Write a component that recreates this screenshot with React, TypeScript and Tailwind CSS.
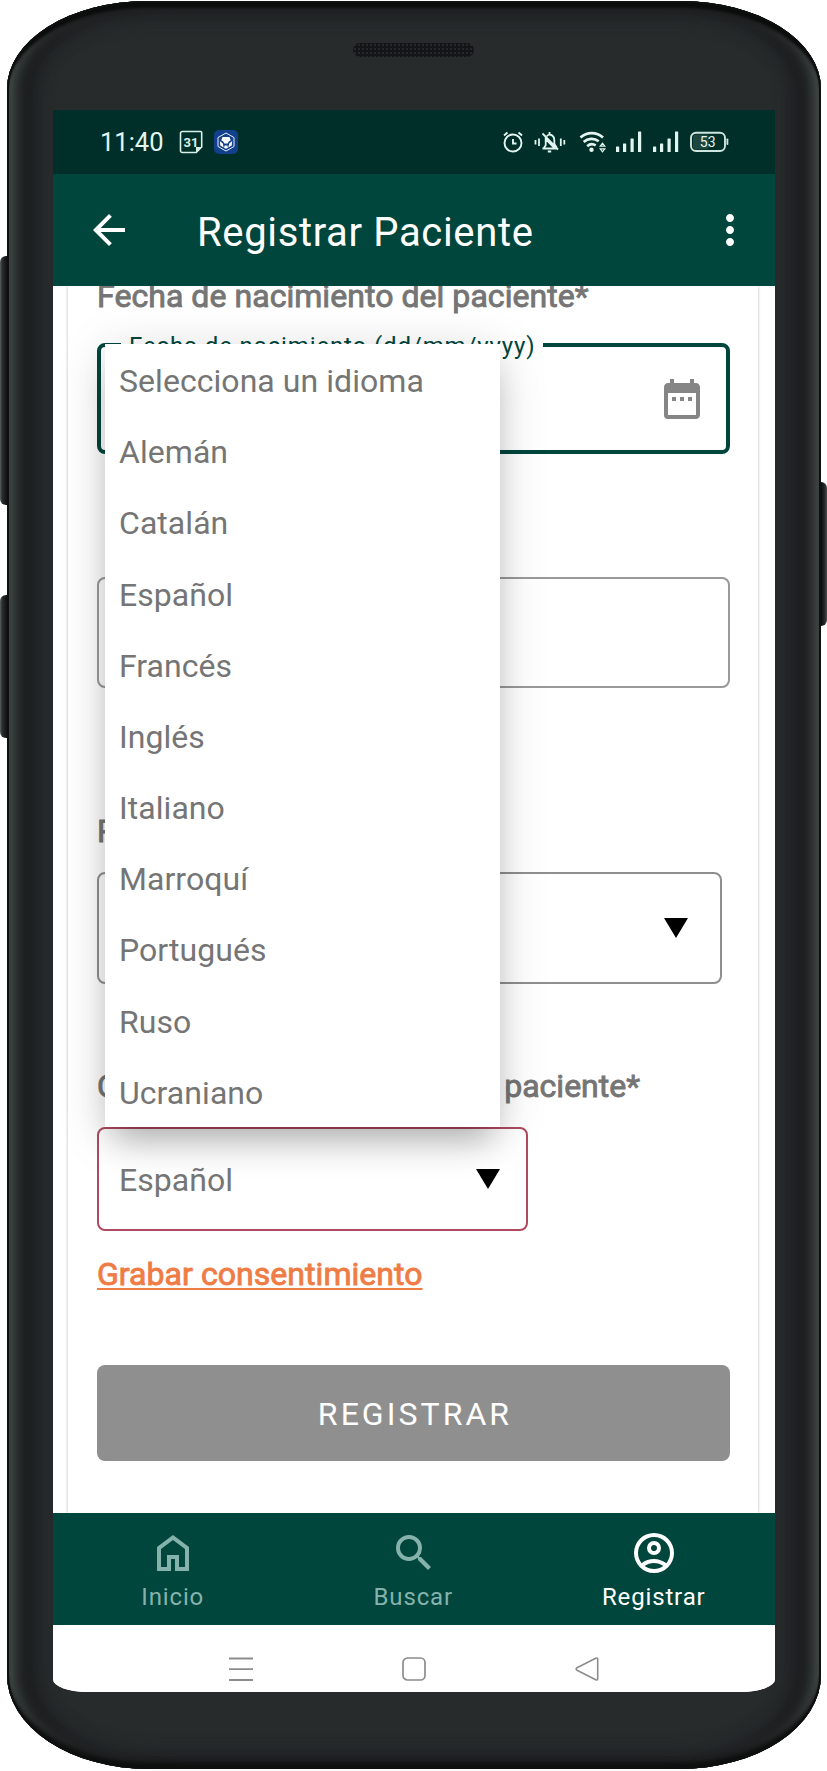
import type { ReactNode } from "react";
import { MdArrowBack, MdDateRange, MdMoreVert, MdSearch } from "react-icons/md";

const languages = [
  "Selecciona un idioma",
  "Alemán",
  "Catalán",
  "Español",
  "Francés",
  "Inglés",
  "Italiano",
  "Marroquí",
  "Portugués",
  "Ruso",
  "Ucraniano",
];

function CalendarDay() {
  return (
    <svg className="h-6 w-6" viewBox="0 0 24 24" fill="none">
      <path d="M3.300 1.500h18.400a1 1 0 0 1 1 1V17l-5.500 5.500H3.300a1.800 1.800 0 0 1-1.800-1.800V3.300a1.800 1.800 0 0 1 1.800-1.800z" stroke="#d9f0e9" strokeWidth="1.600" />
      <path d="M22.500 17l-5.500 5.500v-5.500z" fill="#d9f0e9" />
      <text x="12" y="16.500" textAnchor="middle" fontFamily="Roboto, sans-serif" fontSize="13" fontWeight="700" fill="#d9f0e9">
        31
      </text>
    </svg>
  );
}

function LionBadge() {
  return (
    <svg className="h-6 w-6" viewBox="0 0 24 24">
      <rect width="24" height="24" rx="5" fill="#12408c" />
      <path d="M12 3l8 4.500v9L12 21l-8-4.500v-9z" fill="none" stroke="#e8f0fa" strokeWidth="1" />
      <path d="M8.500 7h7l1.200 3.300-2 1.200-1 2h-3.400l-1-2-2-1.200z" fill="#fff" />
      <path d="M5.800 11l3 2.500.9 4-3.400-1.900zM18.200 11l-3 2.500-.9 4 3.400-1.900zM10.700 15.500h2.600l.7 2.300-2 1-2-1z" fill="#fff" />
    </svg>
  );
}

function Alarm() {
  return (
    <svg className="h-6 w-5" viewBox="0 0 20 24" fill="none" stroke="#e2f5f0" strokeWidth="1.900">
      <circle cx="10" cy="13" r="8.500" />
      <path d="M10 9V13.500h3.500" />
      <path d="M1 5.500L4.500 2.500M19 5.500l-3.500-3" />
    </svg>
  );
}

function BellOff() {
  return (
    <svg className="h-6 w-8" viewBox="0 0 32 24" fill="none" stroke="#e2f5f0" strokeWidth="1.800">
      <path d="M8.500 18.500h14M9.700 18.300l2-3V9l9.300 9.500M12.800 6.300A5 5 0 0 1 15.500 4.500V2M15.500 4.500c3.200.6 4.800 3 4.800 5.700v3.600l2.400 4M8.500 3.500l15.500 16M13.800 21.500h3.400" />
      <path d="M1.500 10v4.500M5 8.500v7.500M26.800 8.500v7.500M30.300 10v4.500" />
    </svg>
  );
}

function Wifi() {
  return (
    <svg className="h-6 w-7" viewBox="0 0 28 24" fill="none">
      <path d="M1.500 7.500a16.500 16.500 0 0 1 22.500 0M4.700 12a11.500 11.500 0 0 1 15-.8M8.200 16.200a7 7 0 0 1 8.500-.8" stroke="#e2f5f0" strokeWidth="2.700" />
      <circle cx="12.500" cy="19.800" r="2.200" fill="#e2f5f0" />
      <path d="M21.200 16.200l2.300-3 2.300 3zM21.200 18.800l2.300 3 2.300-3z" stroke="#e2f5f0" strokeWidth="1.200" />
    </svg>
  );
}

function Signal() {
  return (
    <svg className="h-6 w-[26px]" viewBox="0 0 26 24" fill="#e2f5f0">
      <rect x="0" y="16.500" width="3.200" height="5.500" rx=".5" />
      <rect x="7" y="13.500" width="3.200" height="8.500" rx=".5" />
      <rect x="14.500" y="8.500" width="3.200" height="13.500" rx=".5" />
      <rect x="22" y="1.500" width="3.200" height="20.500" rx=".5" />
    </svg>
  );
}

function Battery() {
  return (
    <svg className="h-6 w-[39px]" viewBox="0 0 39 24">
      <rect x="1" y="2.700" width="34" height="18.300" rx="5" fill="none" stroke="#cfe5df" strokeWidth="1.900" />
      <rect x="3" y="4.500" width="16" height="14.700" rx="3" fill="#1d463f" />
      <rect x="36.500" y="8.500" width="1.800" height="6.500" rx=".8" fill="#cfe5df" />
      <text x="17.700" y="16.600" textAnchor="middle" fontFamily="Roboto, sans-serif" fontSize="14" fill="#e2f5f0">
        53
      </text>
    </svg>
  );
}

function HomeIcon() {
  return (
    <svg className="h-12 w-12" viewBox="0 0 24 24" fill="currentColor">
      <path d="M6 19h3v-6h6v6h3v-9l-6-4.500L6 10v9zM4 21V9l8-6 8 6v12h-7v-6h-2v6z" fillRule="evenodd" />
    </svg>
  );
}

function AccountIcon() {
  return (
    <svg className="h-12 w-12" viewBox="0 0 24 24" fill="currentColor">
      <path d="M5.850 17.100q1.275-.975 2.850-1.538T12 15t3.300.563t2.850 1.537q.875-1.025 1.363-2.325T20 12q0-3.325-2.337-5.663T12 4T6.337 6.338T4 12q0 1.475.488 2.775T5.850 17.100M12 13q-1.475 0-2.488-1.012T8.500 9.500t1.013-2.488T12 6t2.488 1.013T15.500 9.500t-1.012 2.488T12 13m0 9q-2.075 0-3.900-.788t-3.175-2.137T2.788 15.900T2 12t.788-3.900t2.137-3.175T8.100 2.788T12 2t3.900.788t3.175 2.137T21.213 8.100T22 12t-.788 3.900t-2.137 3.175t-3.175 2.138T12 22m0-2q1.325 0 2.500-.387t2.150-1.113q-.975-.725-2.150-1.112T12 17t-2.500.388T7.350 18.500q.975.725 2.150 1.113T12 20m0-9q.650 0 1.075-.425T13.500 9.500t-.425-1.075T12 8t-1.075.425T10.500 9.500t.425 1.075T12 11" />
    </svg>
  );
}

function Caret() {
  return (
    <svg className="h-5 w-6" viewBox="0 0 24 20">
      <path d="M0 0h24L12 20z" fill="#000" />
    </svg>
  );
}

function StatusBar() {
  return (
    <div className="flex h-16 shrink-0 items-center bg-[#002f29] pr-[46px] pl-[47px]">
      <span className="w-[79px] pt-[2px] text-[25.500px] leading-none text-[#e2f5f0]">11:40</span>
      <CalendarDay />
      <span className="ml-[11px] flex">
        <LionBadge />
      </span>
      <span className="ml-auto flex items-center">
        <Alarm />
        <span className="ml-[11px] flex"><BellOff /></span>
        <span className="ml-[13px] flex"><Wifi /></span>
        <span className="ml-[9px] flex"><Signal /></span>
        <span className="ml-[11px] flex"><Signal /></span>
        <span className="ml-[11px] flex"><Battery /></span>
      </span>
    </div>
  );
}

function AppBar() {
  return (
    <div className="flex h-28 shrink-0 items-center bg-[#00463d] pr-[21px] pl-8 text-white">
      <MdArrowBack className="h-12 w-12" />
      <h1 className="ml-[64px] pt-[6px] text-[40px] leading-none tracking-[0.650px]">Registrar Paciente</h1>
      <MdMoreVert className="ml-auto h-12 w-12" />
    </div>
  );
}

function NavItem({ icon, label, active = false }: { icon: ReactNode; label: string; active?: boolean }) {
  return (
    <div className={active ? "flex flex-1 flex-col items-center pt-4 text-white" : "flex flex-1 flex-col items-center pt-4 text-[#85b2ab]"}>
      {icon}
      <span className="mt-[6px] pr-px text-[24px] leading-7 tracking-[0.850px]">{label}</span>
    </div>
  );
}

function LanguageMenu() {
  return (
    <ul className="absolute top-[58px] left-[52px] z-10 w-[395px] bg-white shadow-[0_22px_30px_-10px_rgba(0,0,0,0.22),0_8px_44px_rgba(0,0,0,0.17)]">
      {languages.map((name) => (
        <li key={name} className="flex h-[71.180px] items-center pt-[3px] pl-[14px] text-[32px] leading-none tracking-[0.050px] text-[#757575]">
          {name}
        </li>
      ))}
    </ul>
  );
}

function Form() {
  return (
    <div className="relative h-[1227px] shrink-0 overflow-hidden bg-white pr-[17px] pl-[15px]">
      <div className="h-full bg-white px-[29px] shadow-[0_0_3px_rgba(0,0,0,0.28)]">
        <div className="flex h-[57px] items-start">
          <span className="-mt-[9px] text-[32px] leading-[38px] tracking-[0.050px] whitespace-nowrap text-[#757575] [-webkit-text-stroke:0.900px_#757575]">
            Fecha de nacimiento del paciente*
          </span>
        </div>
        <div className="relative flex h-[111px] w-[633px] items-center justify-end rounded-lg border-4 border-[#00463d] pr-5">
          <span className="absolute -top-[15px] left-5 bg-white pr-[8px] pl-[8px] text-[24px] leading-7 tracking-[0.870px] whitespace-nowrap text-[#00463d]">
            Fecha de nacimiento (dd/mm/yyyy)
          </span>
          <MdDateRange className="h-12 w-12 text-[#858585]" />
        </div>
        <div className="mt-[123px] h-[111px] w-[633px] rounded-lg border-2 border-[#999]" />
        <div className="mt-[124px] h-[60px] text-[32px] leading-[38px] text-[#757575] [-webkit-text-stroke:0.900px_#757575]">País de origen*</div>
        <div className="flex h-[112px] w-[625px] items-center justify-end rounded-lg border-2 border-[#8f8f8f] pr-8">
          <Caret />
        </div>
        <div className="mt-[83px] flex h-[60px] w-[543px] justify-between text-[32px] leading-[38px] text-[#757575] [-webkit-text-stroke:0.900px_#757575]">
          <span>Consentimiento del</span>
          <span>paciente*</span>
        </div>
        <div className="flex h-[104px] w-[431px] items-center justify-between rounded-lg border-2 border-[#b04a5f] pr-[26px] pl-[20px]">
          <span className="relative z-20 pt-[2px] text-[32px] leading-none tracking-[0.050px] text-[#757575]">Español</span>
          <span className="relative z-20 flex">
            <Caret />
          </span>
        </div>
        <div className="mt-6 h-[110px]">
          <a className="text-[32px] leading-[38px] tracking-[0.050px] text-[#ef7c45] underline decoration-2 underline-offset-[3px] [-webkit-text-stroke:0.900px_#ef7c45]">
            Grabar consentimiento
          </a>
        </div>
        <button className="h-24 w-[633px] rounded-lg bg-[#8f8f8f] pt-[2px] pl-[3px] text-[32px] leading-none tracking-[3.050px] text-white">
          REGISTRAR
        </button>
      </div>
      <LanguageMenu />
    </div>
  );
}

function SystemBar() {
  return (
    <div className="flex h-[67px] shrink-0 items-start justify-center bg-white pt-8">
      <svg className="h-6 w-6" viewBox="0 0 24 24" stroke="#8c8c8c" strokeWidth="1.800">
        <path d="M0 1.500h24M0 12.200h24M0 23h24" />
      </svg>
      <svg className="mx-[149px] h-6 w-6" viewBox="0 0 24 24" fill="none" stroke="#8c8c8c" strokeWidth="1.700">
        <rect x="1" y="1" width="22" height="22" rx="4.500" />
      </svg>
      <svg className="h-6 w-6" viewBox="0 0 24 24" fill="none" stroke="#8c8c8c" strokeWidth="1.600" strokeLinejoin="round">
        <path d="M2 10.700L20.700 1.200q2-.8 2 1.300v19q0 2.100-2 1.300L2 13.300q-1.800-1.300 0-2.600z" />
      </svg>
    </div>
  );
}

export default function App() {
  return (
    <div className="flex h-[1771px] w-[827px] overflow-hidden bg-white font-['Roboto',sans-serif]">
      <div className="flex w-[7px] shrink-0 flex-col pt-64">
        <div className="h-[249px] rounded-l-md bg-linear-to-r from-[#5a605f] via-[#2b2f30] via-30% to-[#111]" />
        <div className="mt-[90px] h-[143px] rounded-l-md bg-linear-to-r from-[#5a605f] via-[#2b2f30] via-30% to-[#111]" />
      </div>
      <div className="mt-px flex h-[1768px] w-[813.500px] shrink-0 flex-col bg-[#272b2c] px-[46px] [border-radius:140px_140px_142px_142px/88px_88px_94px_94px] shadow-[inset_0_0_0_2px_#0e1010,inset_0_8px_3px_-1px_#0b0c0c,inset_0_-8px_4px_-1px_#0e0f0f,inset_12px_0_15px_-5px_#4c5553,inset_-12px_0_15px_-5px_#4c5553,inset_30px_0_18px_-2px_#1b1d1e,inset_-30px_0_18px_-2px_#1b1d1e,inset_0_0_24px_8px_#1c1e1f]">
        <div className="flex h-[109px] shrink-0 justify-center pt-[42px]">
          <div className="h-[14px] w-[121px] rounded-full bg-[#131516] bg-[radial-gradient(circle,#25282a_0.800px,transparent_1.400px)] bg-[size:4px_4px]" />
        </div>
        <div className="flex h-[1582px] flex-col overflow-hidden bg-white [border-radius:0_0_34px_34px/0_0_13px_13px]">
          <StatusBar />
          <AppBar />
          <Form />
          <nav className="flex h-28 shrink-0 bg-[#00463d]">
            <NavItem icon={<HomeIcon />} label="Inicio" />
            <NavItem icon={<MdSearch className="h-12 w-12" />} label="Buscar" />
            <NavItem icon={<AccountIcon />} label="Registrar" active />
          </nav>
          <SystemBar />
        </div>
      </div>
      <div className="w-[6px] shrink-0 pt-[482px]">
        <div className="h-36 rounded-r-md bg-linear-to-r from-[#0c0d0d] via-[#26292a] via-60% to-[#4a5050]" />
      </div>
    </div>
  );
}
